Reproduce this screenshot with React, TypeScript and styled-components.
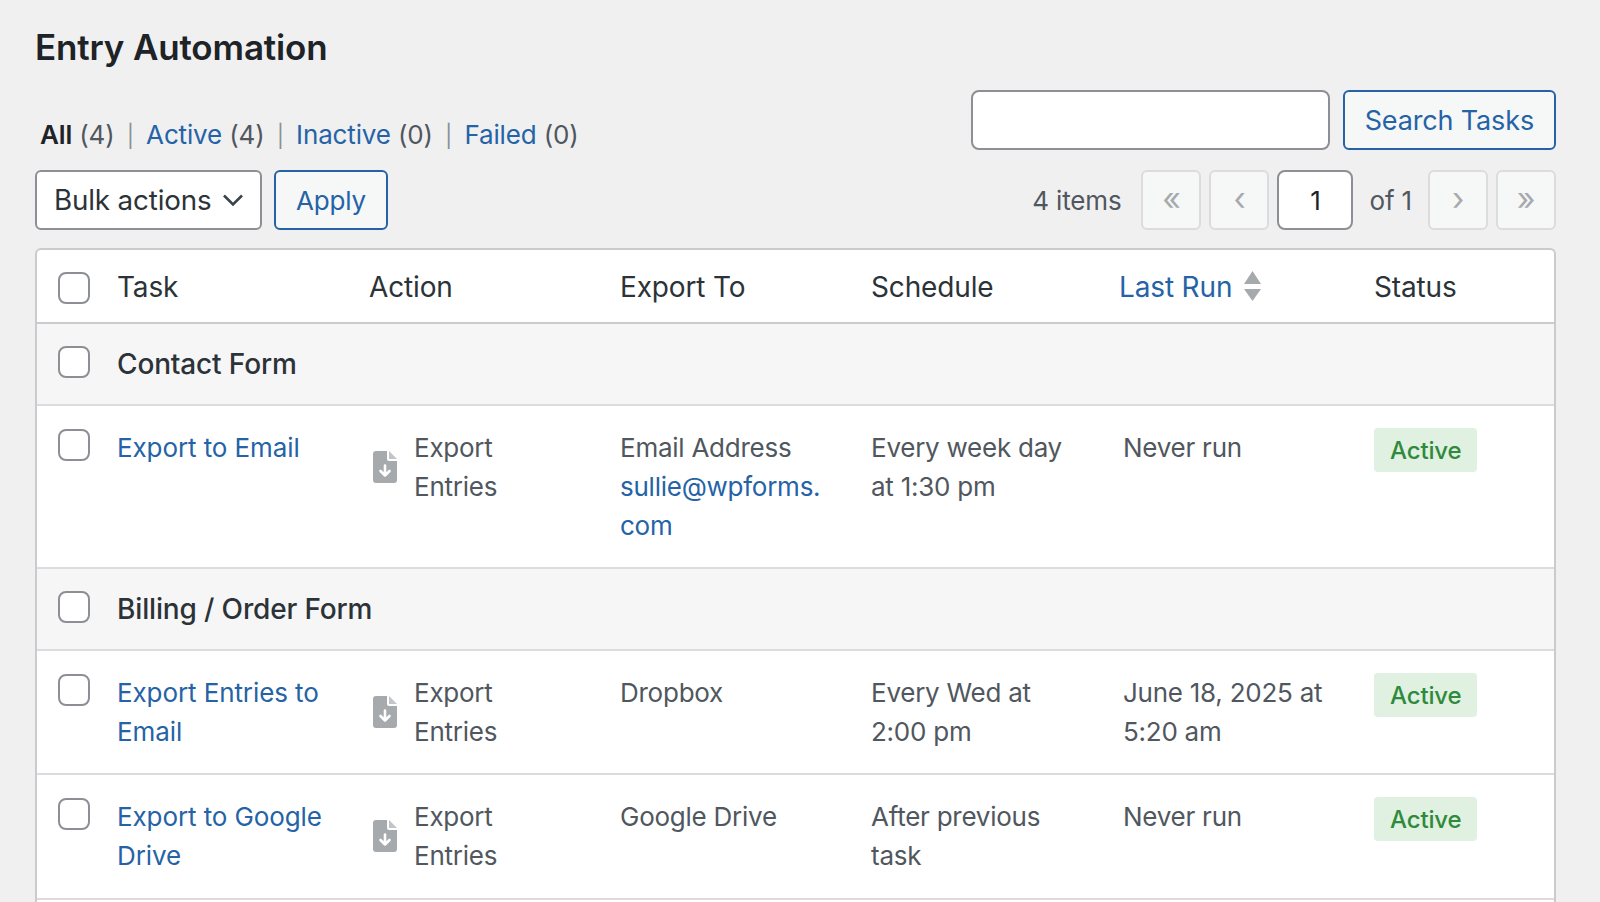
import React from "react";
import styled, { createGlobalStyle } from "styled-components";

const Global = createGlobalStyle`
  html, body { margin: 0; padding: 0; height: 902px; overflow: hidden; background: #f0f0f1; }
  body { font-family: Inter, "Liberation Sans", sans-serif; font-size: 26px; line-height: 39px; letter-spacing: -0.15px; color: #50575e; }
  * { box-sizing: border-box; }
`;

const Page = styled.div`
  width: 1521px;
  margin-left: 35px;
`;
const Title = styled.h1`
  margin: 0;
  padding-top: 24px;
  font-size: 35px;
  line-height: 46px;
  font-weight: 600;
  color: #1d2327;
`;
const TopRow = styled.div`
  display: flex;
  justify-content: space-between;
  margin-top: 20px;
  height: 60px;
`;
const Filters = styled.ul`
  display: flex;
  list-style: none;
  margin: 0;
  padding: 25px 0 0 5px;
`;
const FilterItem = styled.li`
  white-space: pre;
  color: #50575e;
`;
const Sep = styled.span`
  color: #8c8f94;
  padding: 0 12.2px;
  font-size: 22px;
`;
const Strong = styled.strong`
  color: #1d2327;
  font-weight: 600;
`;
const Link = styled.a`
  color: #2563a6;
  text-decoration: none;
`;
const TaskLink = styled(Link)`
  letter-spacing: -0.1px;
`;
const SearchBox = styled.div`
  display: flex;
  gap: 13px;
`;
const TextInput = styled.input`
  width: ${(p) => p.width}px;
  height: 60px;
  border: 2px solid #8c8f94;
  border-radius: 8px;
  background: #fff;
  font: inherit;
  color: #1d2327;
  text-align: center;
  padding: 0;
`;
const OutlineButton = styled.button`
  height: 60px;
  padding: 0 20px;
  border: 2px solid #2563a6;
  border-radius: 6px;
  background: #f6f7f7;
  color: #2563a6;
  font: inherit;
  letter-spacing: inherit;
  font-size: ${(p) => p.$size || 26}px;
`;
const NavRow = styled.div`
  display: flex;
  align-items: center;
  margin-top: 20px;
  height: 60px;
`;
const BulkSelect = styled.div`
  width: 227px;
  height: 60px;
  margin-right: 12px;
  padding: 0 16px 0 17px;
  display: flex;
  align-items: center;
  justify-content: space-between;
  border: 2px solid #8c8f94;
  border-radius: 6px;
  background: #fff;
  color: #2c3338;
  font-size: 27.75px;
`;
const Pagination = styled.div`
  margin-left: auto;
  display: flex;
  align-items: center;
  gap: 8px;
`;
const PageText = styled.span`
  color: #50575e;
  margin: ${(p) => p.$margin};
`;
const PageButton = styled.span`
  width: 60px;
  height: 60px;
  display: flex;
  align-items: center;
  justify-content: center;
  border: 2px solid #dcdcde;
  border-radius: 6px;
  background: #f6f7f7;
  color: #a7aaad;
  font-size: 32px;
  padding-bottom: 4px;
`;
const TableFrame = styled.div`
  margin-top: 18px;
  height: 700px;
  background: #fff;
  border: 2px solid #c9cbcf;
  border-bottom: 0;
  border-radius: 6px 6px 0 0;
  overflow: hidden;
`;
const Table = styled.table`
  width: 100%;
  table-layout: fixed;
  border-collapse: collapse;
`;
const HeadCell = styled.th`
  padding: 18px 25px 15px 20px;
  text-align: left;
  font-weight: 400;
  font-size: 28px;
  color: #2c3338;
  border-bottom: 2px solid #c9cbcf;
`;
const Cell = styled.td`
  padding: 22px 25px 22.5px 20px;
  vertical-align: top;
  color: #50575e;
  letter-spacing: -0.25px;
  overflow-wrap: anywhere;
`;
const CheckCell = styled.td`
  padding: ${(p) => p.$top}px 0 0 21px;
  vertical-align: top;
`;
const Row = styled.tr`
  border-bottom: 2px solid #dcdcde;
`;
const GroupRow = styled.tr`
  background: #f6f6f7;
  border-bottom: 2px solid #dcdcde;
`;
const GroupCell = styled.td`
  padding: 20.5px 25px 20px 20px;
  font-weight: 500;
  font-size: 28px;
  color: #2c3338;
`;
const Check = styled.span`
  display: block;
  width: 32px;
  height: 32px;
  border: 2px solid #8c8f94;
  border-radius: 8px;
  background: #fff;
`;
const ActionWrap = styled.div`
  display: flex;
  align-items: center;
  gap: 17px;
  padding-left: 4px;
`;
const SortLink = styled.a`
  display: inline-flex;
  align-items: center;
  gap: 12px;
  margin-left: -4px;
  color: #2563a6;
  text-decoration: none;
  svg { margin-top: -4px; }
`;
const Badge = styled.span`
  display: inline-block;
  height: 44px;
  padding: 3px 16px 0;
  border-radius: 4px;
  background: #e0f0e1;
  color: #2f8a3c;
  font-weight: 500;
  font-size: 24px;
  letter-spacing: -0.15px;
`;
const SpacerRow = styled.tr`
  height: 60px;
`;

const FileIcon = () => (
  <svg width="24" height="32" viewBox="0 0 24 32" style={{ flex: "none" }}>
    <path d="M3 0h11v8a2 2 0 0 0 2 2h8v19a3 3 0 0 1-3 3H3a3 3 0 0 1-3-3V3a3 3 0 0 1 3-3z" fill="#a7aaad" />
    <path d="M16 0l8 8h-8z" fill="#c3c4c7" />
    <path d="M12 14.5v10M7.5 20l4.5 4.5 4.5-4.5" fill="none" stroke="#fff" strokeWidth="2.6" strokeLinecap="round" strokeLinejoin="round" />
  </svg>
);
const Chevron = () => (
  <svg width="22" height="14" viewBox="0 0 22 14">
    <path d="M2 2.5l9 9 9-9" fill="none" stroke="#3c434a" strokeWidth="2.6" />
  </svg>
);
const SortIcon = () => (
  <svg width="17" height="30" viewBox="0 0 17 30">
    <path d="M8.5 0L17 13H0z M0 18h17l-8.5 12z" fill="#a7aaad" />
  </svg>
);

const Action = () => (
  <ActionWrap>
    <FileIcon />
    <span>Export Entries</span>
  </ActionWrap>
);
const Active = () => <Badge>Active</Badge>;

const tasks = [
  { group: "Contact Form" },
  { name: "Export to Email", to: <>Email Address<br /><Link>sullie@wpforms.com</Link></>, schedule: "Every week day at 1:30 pm", last: "Never run" },
  { group: "Billing / Order Form" },
  { name: "Export Entries to Email", to: "Dropbox", schedule: "Every Wed at 2:00 pm", last: "June 18, 2025 at 5:20 am" },
  { name: "Export to Google Drive", to: "Google Drive", schedule: "After previous task", last: "Never run" },
];

export default function App() {
  return (
    <Page>
      <Global />
      <Title>Entry Automation</Title>
      <TopRow>
        <Filters>
          <FilterItem><Strong>All</Strong> (4)<Sep>|</Sep></FilterItem>
          <FilterItem><Link>Active</Link> (4)<Sep>|</Sep></FilterItem>
          <FilterItem><Link>Inactive</Link> (0)<Sep>|</Sep></FilterItem>
          <FilterItem><Link>Failed</Link> (0)</FilterItem>
        </Filters>
        <SearchBox>
          <TextInput width={359} aria-label="Search" />
          <OutlineButton $size={27}>Search Tasks</OutlineButton>
        </SearchBox>
      </TopRow>
      <NavRow>
        <BulkSelect>Bulk actions<Chevron /></BulkSelect>
        <OutlineButton>Apply</OutlineButton>
        <Pagination>
          <PageText $margin="0 12px 0 0">4 items</PageText>
          <PageButton>«</PageButton>
          <PageButton>‹</PageButton>
          <TextInput width={76} defaultValue="1" aria-label="Page" />
          <PageText $margin="0 8px">of 1</PageText>
          <PageButton>›</PageButton>
          <PageButton>»</PageButton>
        </Pagination>
      </NavRow>
      <TableFrame>
        <Table>
          <colgroup>
            <col style={{ width: 60 }} />
            <col style={{ width: 252 }} />
            <col style={{ width: 251 }} />
            <col style={{ width: 251 }} />
            <col style={{ width: 252 }} />
            <col style={{ width: 251 }} />
            <col />
          </colgroup>
          <thead>
            <tr>
              <CheckCell as="th" $top={22} style={{ borderBottom: "2px solid #c9cbcf" }}><Check /></CheckCell>
              <HeadCell>Task</HeadCell>
              <HeadCell>Action</HeadCell>
              <HeadCell>Export To</HeadCell>
              <HeadCell>Schedule</HeadCell>
              <HeadCell><SortLink>Last Run<SortIcon /></SortLink></HeadCell>
              <HeadCell>Status</HeadCell>
            </tr>
          </thead>
          <tbody>
            {tasks.map((t, i) =>
              t.group ? (
                <GroupRow key={i}>
                  <CheckCell $top={22}><Check /></CheckCell>
                  <GroupCell colSpan={6}>{t.group}</GroupCell>
                </GroupRow>
              ) : (
                <Row key={i}>
                  <CheckCell $top={23}><Check /></CheckCell>
                  <Cell><TaskLink>{t.name}</TaskLink></Cell>
                  <Cell><Action /></Cell>
                  <Cell>{t.to}</Cell>
                  <Cell>{t.schedule}</Cell>
                  <Cell>{t.last}</Cell>
                  <Cell><Active /></Cell>
                </Row>
              )
            )}
            <SpacerRow />
          </tbody>
        </Table>
      </TableFrame>
    </Page>
  );
}
